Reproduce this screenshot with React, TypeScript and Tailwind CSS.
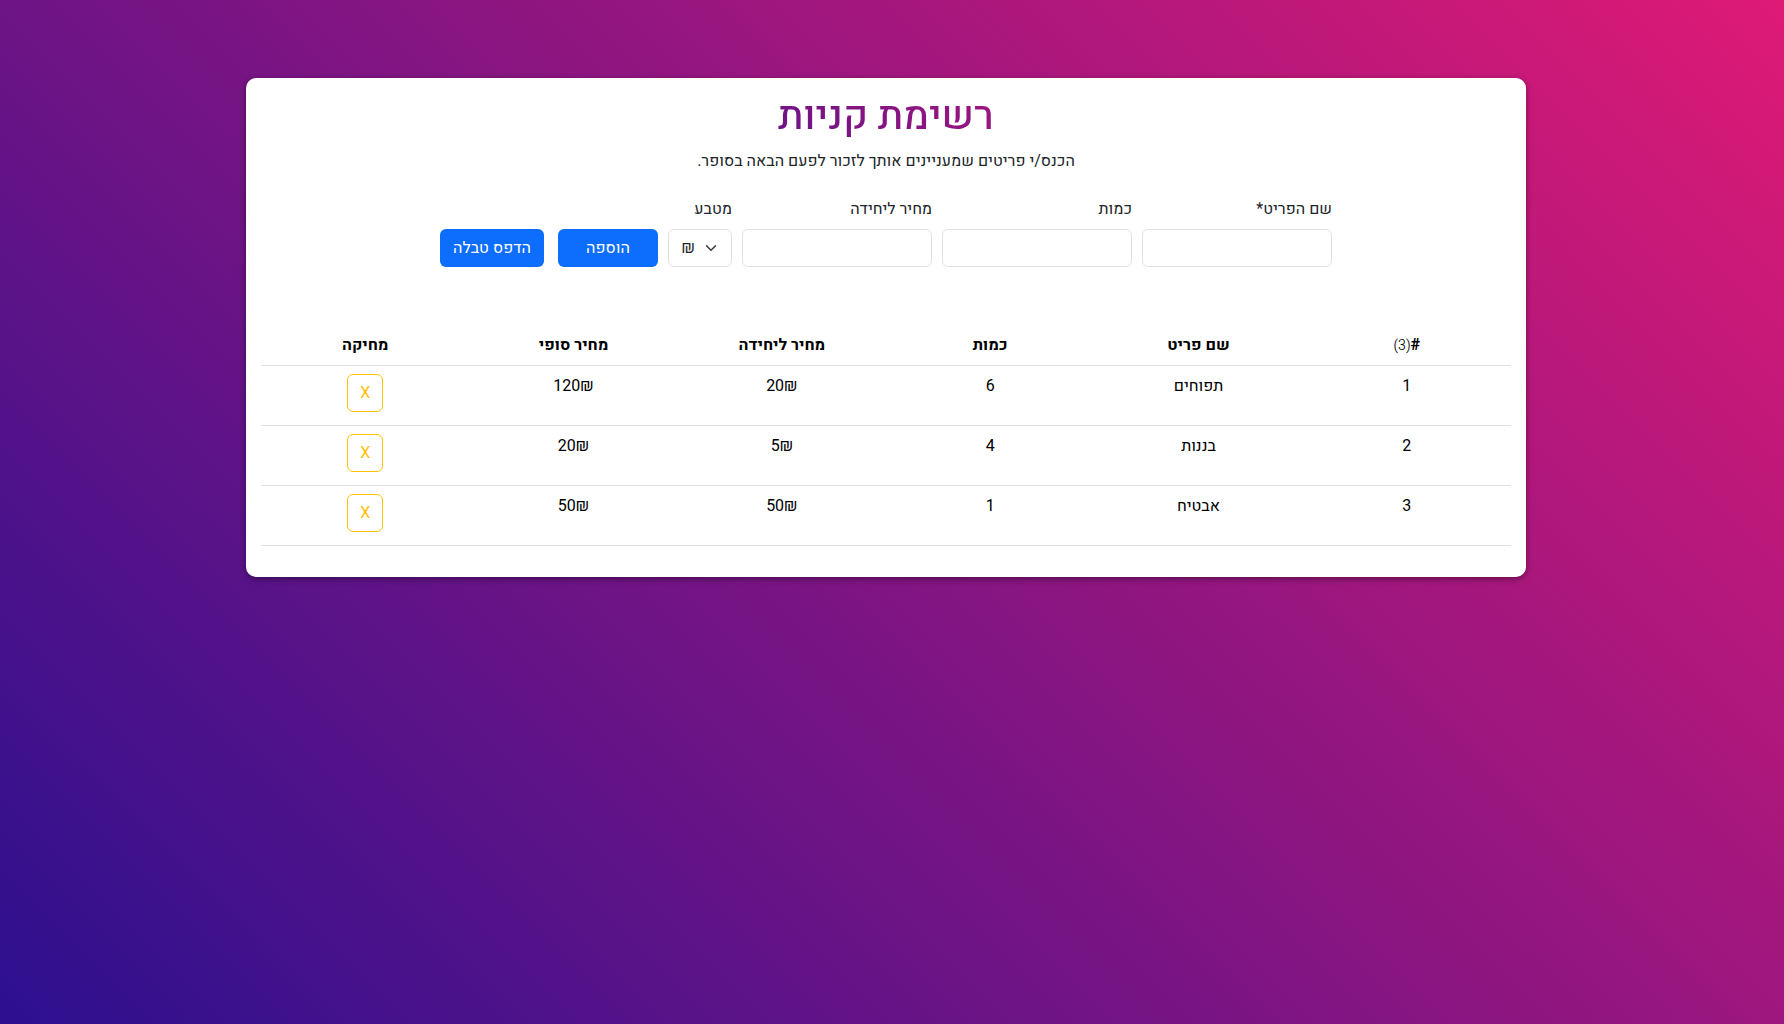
import { useState } from "react";

type Item = { name: string; amount: number; price: number };

const initialItems: Item[] = [
  { name: "תפוחים", amount: 6, price: 20 },
  { name: "בננות", amount: 4, price: 5 },
  { name: "אבטיח", amount: 1, price: 50 },
];

const fieldClass = "h-[38px] w-full rounded-md border border-[#dee2e6] bg-white px-3 text-base text-[#212529]";

function Field({ id, label }: { id: string; label: string }) {
  return (
    <div className="w-[190px]">
      <label htmlFor={id} className="mb-2 block">{label}</label>
      <input id={id} type="text" className={fieldClass} />
    </div>
  );
}

const columns = ["שם פריט", "כמות", "מחיר ליחידה", "מחיר סופי", "מחיקה"];

export default function App() {
  const [items, setItems] = useState(initialItems);
  return (
    <div
      dir="rtl"
      className="min-h-screen bg-[linear-gradient(45deg,#2c108f,#de1a75)] ps-3 pt-[78px] font-[Heebo,Roboto,'Open_Sans',sans-serif] text-base text-[#212529]"
    >
      <main className="mx-auto max-w-[1280px] rounded-[10px] bg-white px-[15px] pt-[15px] pb-[31px] shadow-[0_2px_6px_rgba(0,0,0,0.4)]">
        <h1 className="mx-auto mb-2 max-w-[892px] bg-[linear-gradient(45deg,#2c108f,#de1a75)] bg-clip-text text-center text-[40px] leading-[48px] font-medium text-transparent">
          רשימת קניות
        </h1>
        <p className="mb-6 text-center">הכנס/י פריטים שמעניינים אותך לזכור לפעם הבאה בסופר.</p>
        <form className="flex flex-wrap items-end justify-center gap-[10px]" onSubmit={(e) => e.preventDefault()}>
          <Field id="name" label="שם הפריט*" />
          <Field id="amount" label="כמות" />
          <Field id="price" label="מחיר ליחידה" />
          <div className="w-16">
            <label htmlFor="currency" className="mb-2 block">מטבע</label>
            <div className="relative">
              <select id="currency" className="h-[38px] w-full appearance-none rounded-md border border-[#dee2e6] bg-white ps-9 pe-3 text-base text-[#212529]">
                <option>₪</option>
                <option>$</option>
              </select>
              <svg viewBox="0 0 16 16" className="pointer-events-none absolute top-[13px] right-[15px] size-3" fill="none" stroke="#343a40" strokeWidth="2" strokeLinecap="round" strokeLinejoin="round" aria-hidden="true">
                <path d="m2 5 6 6 6-6" />
              </svg>
            </div>
          </div>
          <div className="flex gap-[14px]">
            <button type="submit" className="h-[38px] w-[100px] rounded-md bg-[#0d6efd] text-white">הוספה</button>
            <button type="button" className="h-[38px] w-[104px] rounded-md bg-[#0d6efd] text-white">הדפס טבלה</button>
          </div>
        </form>
        <table className="mt-[58px] w-full table-fixed text-center text-black">
          <thead>
            <tr className="border-b border-[#dee2e6]">
              <th className="p-2 font-bold">
                #<span className="text-sm font-light">(3)</span>
              </th>
              {columns.map((c) => (
                <th key={c} className="p-2 font-bold">{c}</th>
              ))}
            </tr>
          </thead>
          <tbody>
            {items.map((item, i) => (
              <tr key={item.name} className="h-[60px] border-b border-[#dee2e6] align-top">
                <td className="p-2">{i + 1}</td>
                <td className="p-2">{item.name}</td>
                <td className="p-2">{item.amount}</td>
                <td className="p-2">{item.price}₪</td>
                <td className="p-2">{item.price * item.amount}₪</td>
                <td className="p-2">
                  <button
                    type="button"
                    onClick={() => setItems(items.filter((other) => other !== item))}
                    className="h-[38px] w-9 rounded-md border border-[#ffc107] text-[#ffc107]"
                  >
                    X
                  </button>
                </td>
              </tr>
            ))}
          </tbody>
        </table>
      </main>
    </div>
  );
}
